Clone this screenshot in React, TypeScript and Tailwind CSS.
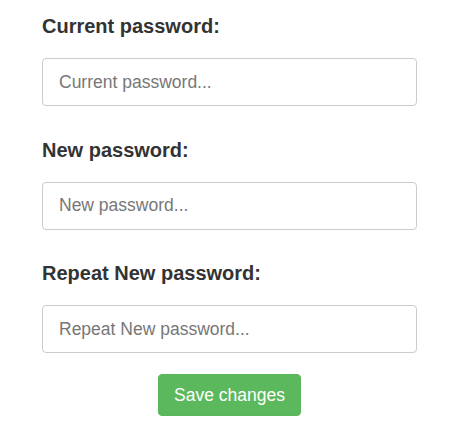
import React from "react";

const fields = ["Current password", "New password", "Repeat New password"];

export default function App() {
  return (
    <div className="min-h-[436px] bg-white px-[42px] pt-[12px] font-['Liberation_Sans',Arial,sans-serif] text-[#333]">
      <div className="flex flex-col gap-[29.5px]">
        {fields.map((f) => (
          <div key={f}>
            <label className="mb-[18px] block text-[20px] font-bold leading-[28px]">{f}:</label>
            <input
              type="password"
              placeholder={`${f}...`}
              className="block h-[48px] w-full rounded-[4px] border border-[#ccc] bg-white px-[16px] text-[17.5px] text-[#555] placeholder:text-[#777] outline-none"
            />
          </div>
        ))}
      </div>
      <div className="mt-[21px] flex justify-center">
        <button className="h-[42px] rounded-[4px] border border-[#58b658] bg-[#5cb85c] px-[15px] text-[17.5px] leading-[24px] text-white">
          Save changes
        </button>
      </div>
    </div>
  );
}
